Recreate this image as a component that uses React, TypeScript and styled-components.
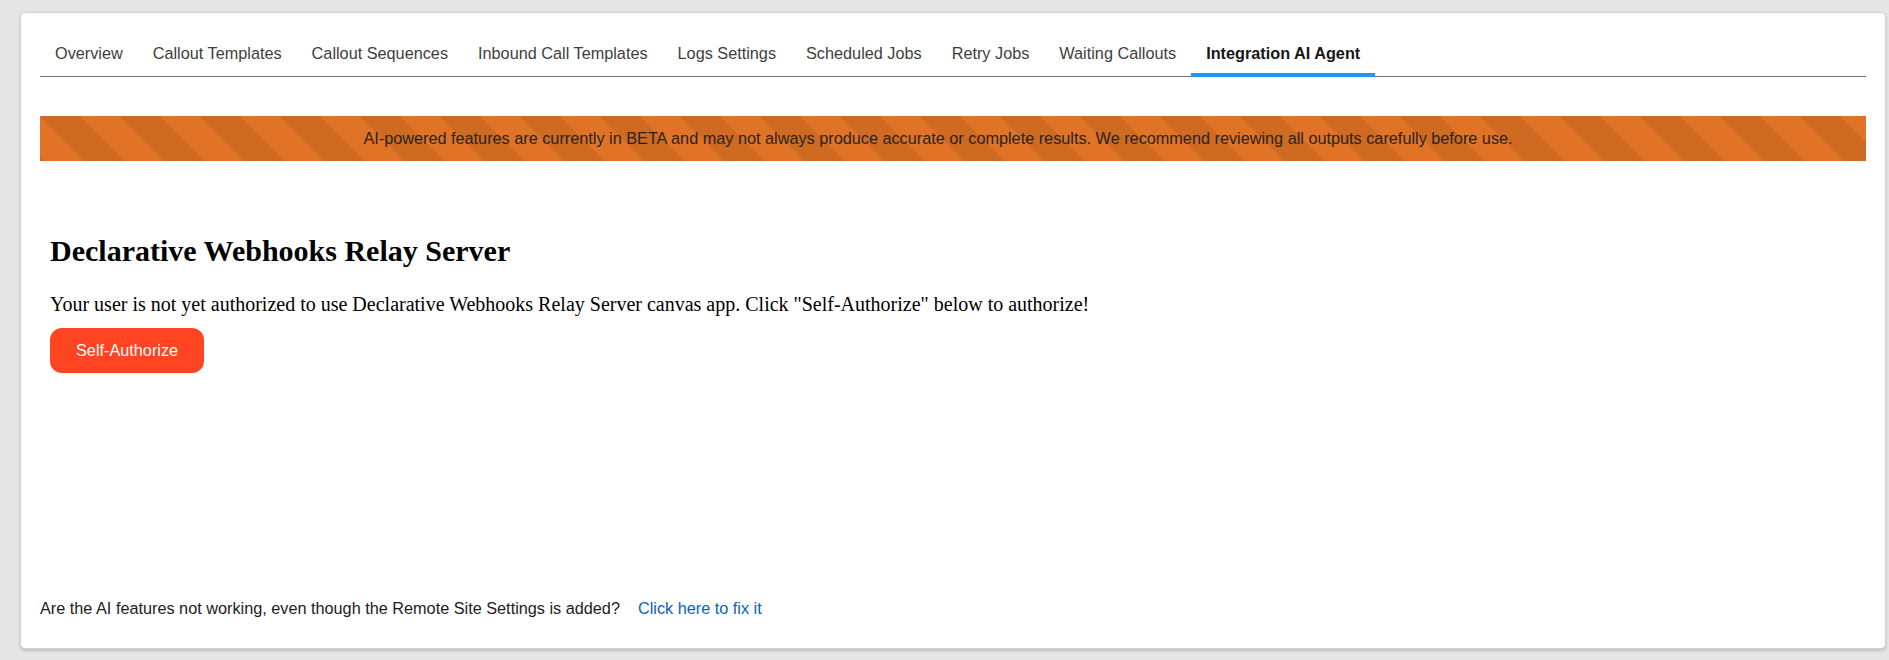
import React from "react";
import styled, { createGlobalStyle } from "styled-components";

const GlobalStyle = createGlobalStyle`
  html, body {
    margin: 0;
    padding: 0;
    background: #e5e5e5;
  }
  * { box-sizing: border-box; }
`;

const Page = styled.div`
  height: 660px;
  padding: 12px 3px 11px 20px;
  display: flex;
`;

const Card = styled.div`
  flex: 1;
  display: flex;
  flex-direction: column;
  background: #ffffff;
  border: 1px solid #d2d2d2;
  border-radius: 5px;
  box-shadow: 0 2px 3px rgba(0, 0, 0, 0.16);
  padding: 17px 19px 31px 19px;
  font-family: "Liberation Sans", Arial, sans-serif;
`;

const TabBar = styled.nav`
  display: flex;
  border-bottom: 1px solid #777777;
`;

const Tab = styled.a<{ $active?: boolean }>`
  display: block;
  padding: 14px 15px 11px;
  margin-bottom: -1px;
  font-size: 16.25px;
  line-height: 18px;
  color: ${(p) => (p.$active ? "#161616" : "#3e3e3c")};
  font-weight: ${(p) => (p.$active ? 700 : 400)};
  border-bottom: 4px solid ${(p) => (p.$active ? "#2196f3" : "transparent")};
  text-decoration: none;
  cursor: pointer;
  white-space: nowrap;
`;

const Banner = styled.div`
  margin-top: 39px;
  height: 45px;
  padding-right: 30px;
  display: flex;
  align-items: center;
  justify-content: center;
  font-size: 16.25px;
  color: #2a2420;
  background-color: #e17327;
  background-image: linear-gradient(
    45deg,
    #cf6a23 25%,
    #e17327 25%,
    #e17327 50%,
    #cf6a23 50%,
    #cf6a23 75%,
    #e17327 75%,
    #e17327
  );
  background-size: 80px 80px;
  background-position: 0 0;
`;

const Content = styled.section`
  padding: 72px 10px 0;
  font-family: "Liberation Serif", "Times New Roman", serif;
  color: #000;
`;

const Heading = styled.h1`
  margin: 0;
  font-size: 30px;
  line-height: 36px;
  font-weight: 700;
`;

const Text = styled.p`
  margin: 23px 0 12px;
  font-size: 20px;
  line-height: 24px;
`;

const AuthButton = styled.button`
  display: inline-flex;
  align-items: center;
  justify-content: center;
  height: 45px;
  padding: 0 26px;
  border: none;
  border-radius: 12px;
  background: #ff4421;
  color: #ffffff;
  font-family: "Liberation Sans", Arial, sans-serif;
  font-size: 16.25px;
  cursor: pointer;
`;

const Footer = styled.div`
  margin-top: auto;
  display: flex;
  gap: 18px;
  font-size: 16.25px;
  line-height: 18px;
  color: #1c1c1c;
`;

const FixLink = styled.a`
  color: #0b62b5;
  text-decoration: none;
  cursor: pointer;
`;

const tabs = [
  "Overview",
  "Callout Templates",
  "Callout Sequences",
  "Inbound Call Templates",
  "Logs Settings",
  "Scheduled Jobs",
  "Retry Jobs",
  "Waiting Callouts",
  "Integration AI Agent",
];

export default function App() {
  return (
    <>
      <GlobalStyle />
      <Page>
        <Card>
          <TabBar>
            {tabs.map((t) => (
              <Tab key={t} $active={t === "Integration AI Agent"}>
                {t}
              </Tab>
            ))}
          </TabBar>
          <Banner>
            AI-powered features are currently in BETA and may not always produce accurate or complete results. We recommend reviewing all outputs carefully before use.
          </Banner>
          <Content>
            <Heading>Declarative Webhooks Relay Server</Heading>
            <Text>
              Your user is not yet authorized to use Declarative Webhooks Relay Server canvas app. Click "Self-Authorize" below to authorize!
            </Text>
            <AuthButton>Self-Authorize</AuthButton>
          </Content>
          <Footer>
            <span>Are the AI features not working, even though the Remote Site Settings is added?</span>
            <FixLink>Click here to fix it</FixLink>
          </Footer>
        </Card>
      </Page>
    </>
  );
}
